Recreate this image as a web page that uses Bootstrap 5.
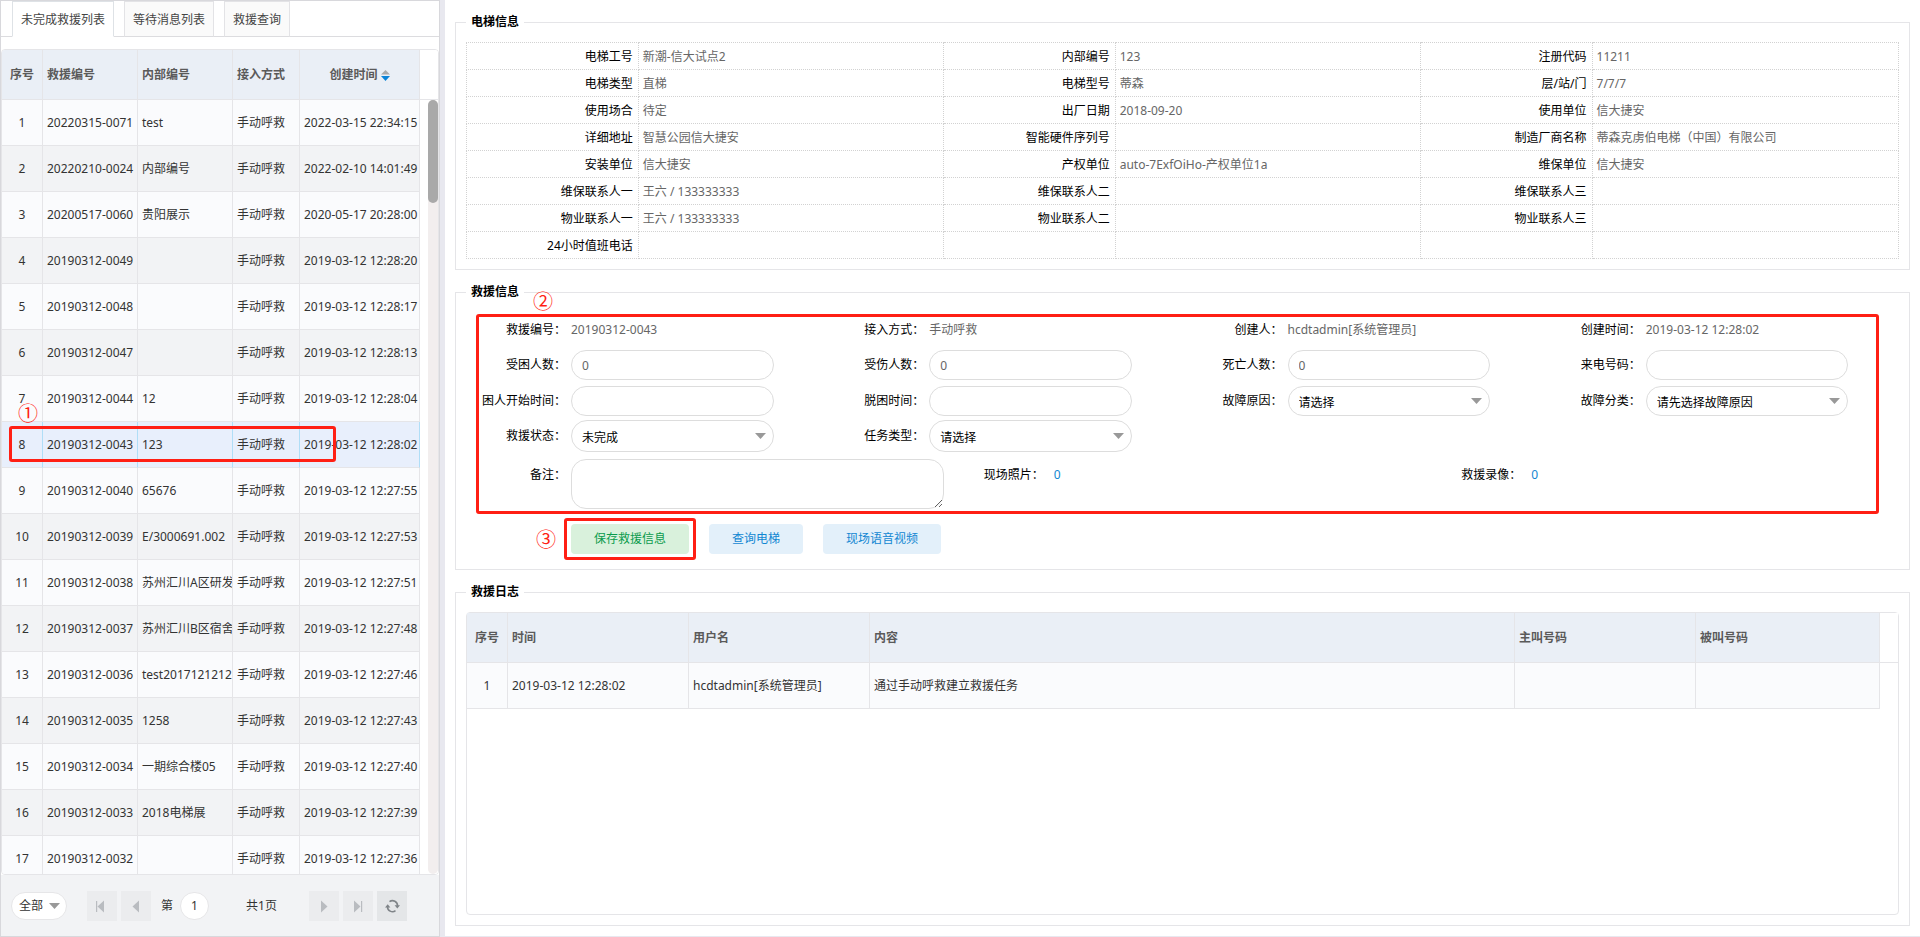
<!DOCTYPE html>
<html lang="zh-CN">
<head>
<meta charset="utf-8">
<meta name="viewport" content="width=device-width, initial-scale=1">
<title>电梯救援</title>
<link rel="stylesheet" href="https://cdn.jsdelivr.net/npm/bootstrap@5.3.0/dist/css/bootstrap.min.css">
<style>
  :root { --line: #e5e5e8; --mark-red: #ff1f14; }
  body {
    font-family: "Noto Sans", "Noto Sans CJK SC", sans-serif;
    font-size: 12px; line-height: 18px; color: #333; background: #e8e8ef;
  }
  button, input, select, textarea { font-family: inherit; font-size: 12px; }

  /* left list */
  .side { width: 440px; border: 1px solid #d8d8dc; background: #fff; }
  .side .nav-tabs { height: 36px; padding-left: 11px; gap: 10px; border-bottom: 1px solid #dcdcdf; }
  .side .nav-link {
    height: 36px; margin: 0; padding: 0 8px; border: 1px solid #e3e3e6; border-bottom-color: #dcdcdf;
    border-radius: 0; background: #fafafa; color: #444; line-height: 36px;
  }
  .side .nav-link.active { background: #fff; border-bottom-color: #fff; color: #444; }
  .list-grid { min-height: 0; margin-top: 12px; border: 1px solid var(--line); border-radius: 4px; }

  .grid-table { width: 100%; table-layout: fixed; border-collapse: separate; border-spacing: 0; }
  .grid-table th, .grid-table td {
    height: 46px; padding: 0 4px; overflow: hidden; white-space: nowrap;
    border: 0 solid var(--line); border-width: 0 1px 1px 0;
  }
  .grid-table th { height: 50px; background: #eaeff6; color: #5a5a5a; font-weight: 700; }
  .grid-table td { background: #fafbfd; }
  .grid-table tr:nth-child(even) td { background: #f2f3f5; }
  .grid-table tr.picked td { background: #e8effc; border-right-color: #b0def7; }
  .grid-table th:first-child, .grid-table td:first-child { text-align: center; }
  .grid-table th.gutter { background: #fff; border-right: 0; }
  .grid-table tr td.gutter, .grid-table tr.picked td.gutter { background: #fff; border: 0; }
  .c-no { width: 41px; }
  .c-code { width: 95px; }
  .c-way { width: 67px; }
  .c-date { width: 120px; }
  .c-log { width: 181px; }
  .c-callee { width: 184px; }
  .c-gutter { width: 18px; }

  .scroll-track { right: 0; top: 50px; bottom: 0; width: 10px; border-radius: 5px; background: #f2eeee; }
  .scroll-thumb { height: 103px; border-radius: 5px; background: #a9a9a9; }

  .pager { height: 61px; padding-left: 10px; background: #f2f3f5; }
  .pager .pill { height: 28px; border: 1px solid #e6e6e8; border-radius: 14px; background-color: #fff; color: #333; }
  .pager select { width: 56px; margin-right: 20px; padding: 0 0 0 7px; background-position: right 6px center; }
  .pager label { margin-left: 10px; }
  .pager input { width: 29px; margin: 0 37px 0 7px; padding: 0; color: #666; }
  .pager .total { margin-right: 32px; }
  .pager .btn { width: 30px; height: 30px; padding: 0; border: 0; border-radius: 0; background: #ebecee; line-height: 0; }
  .pager .btn-reload { background: #e4e6e8; }

  .pick {
    appearance: none;
    background: #fff url("data:image/svg+xml,%3Csvg xmlns='http://www.w3.org/2000/svg' width='11' height='6'%3E%3Cpath d='M0 0h11L5.500 6z' fill='%23999'/%3E%3C/svg%3E") no-repeat right 7px center;
  }

  /* right panels */
  .main { margin: 0 0 1px 5px; padding: 13px 10px 10px; background: #fff; }
  .main fieldset { border: 1px solid var(--line); padding: 11px 10px 10px; }
  .main fieldset + fieldset { margin-top: 13px; }
  .main .rescue { padding-top: 12px; padding-bottom: 15px; }
  .main legend { margin: 0; padding: 0 5px; font-size: 12px; line-height: 18px; font-weight: 700; color: #000; }

  .info-table { width: 100%; table-layout: fixed; border-collapse: collapse; }
  .info-table th, .info-table td { height: 27px; padding: 2px 5px 0 4px; border: 1px dotted #d2d2d2; color: #666; }
  .info-table th { width: 12%; text-align: right; font-weight: 400; color: #000; }
  .info-table td { width: 21.3%; }
  .info-table td:last-child { width: auto; }

  .field { display: flex; align-items: center; height: 36px; }
  .field-low { height: 34px; }
  .field > label, .field > .cap { flex: none; width: 105px; padding-right: 5px; text-align: right; white-space: nowrap; color: #000; }
  .field > .val { color: #666; }
  .field > input, .field > select {
    width: calc((100% - 105px) * 0.8); height: 30px; padding: 0 10px;
    border: 1px solid #ddd; border-radius: 15px; color: #666;
  }
  .field > select { padding-top: 3px; color: #000; }
  .field-low > select { height: 32px; border-radius: 16px; }
  .field-note { height: 56px; padding-top: 6px; }
  .field-note > label, .field-note > .cap, .field-note > a { margin-bottom: 18px; }
  .field-note > textarea { flex: 1; height: 50px; border: 1px solid #ddd; border-radius: 15px; padding: 4px 10px; resize: both; }
  .field-note > a { padding-left: 5px; color: #1287d2; text-decoration: none; }
  .actions { margin-top: 15px; padding-left: 105px; gap: 20px; }
  .actions .btn { height: 30px; padding: 0 23px; border: 0; border-radius: 4px; font-size: 12px; line-height: 30px; }
  .btn-save { background: #d9f1dc; color: #0a9b4c; }
  .btn-soft { background: #e3f0fa; color: #1287d2; }
  .log-grid { border: 1px solid var(--line); border-radius: 4px; }

  /* guide marks lying over the page */
  .frame-mark { position: absolute; border: 3px solid var(--mark-red); border-radius: 3px; pointer-events: none; }
  .step-mark { position: absolute; font-family: "Noto Sans CJK SC", sans-serif; font-size: 20px; line-height: 20px; color: var(--mark-red); pointer-events: none; }
  .frame-row { left: 7px; top: 376px; width: 327px; height: 36px; }
  .step-row { left: 16px; top: 353px; }
  .frame-form { left: 10px; right: 20px; top: 1px; bottom: -5px; }
  .step-form { left: 67px; top: -22px; }
  .frame-save { inset: -6px -7px -6px -7px; }
  .step-save { left: -35px; top: 5px; }
</style>
</head>
<body>
<div class="d-flex vh-100">
  <aside class="side d-flex flex-column flex-shrink-0">
    <ul class="nav nav-tabs flex-nowrap flex-shrink-0">
      <li class="nav-item"><button type="button" class="nav-link active">未完成救援列表</button></li>
      <li class="nav-item"><button type="button" class="nav-link">等待消息列表</button></li>
      <li class="nav-item"><button type="button" class="nav-link">救援查询</button></li>
    </ul>
    <div class="list-grid position-relative flex-grow-1 overflow-hidden">
      <table class="grid-table">
        <colgroup><col class="c-no"><col class="c-code"><col class="c-code"><col class="c-way"><col class="c-date"><col></colgroup>
        <thead>
          <tr><th>序号</th><th>救援编号</th><th>内部编号</th><th>接入方式</th>
            <th class="text-center">创建时间 <svg width="9" height="11" viewBox="0 0 9 11"><path d="M4.500 0L9 4.500H0z" fill="#aaa"/><path d="M0 6h9L4.500 11z" fill="#0b84d8"/></svg></th>
            <th class="gutter"></th></tr>
        </thead>
        <tbody>
          <tr><td>1</td><td>20220315-0071</td><td>test</td><td>手动呼救</td><td>2022-03-15 22:34:15</td><td class="gutter"></td></tr>
          <tr><td>2</td><td>20220210-0024</td><td>内部编号</td><td>手动呼救</td><td>2022-02-10 14:01:49</td><td class="gutter"></td></tr>
          <tr><td>3</td><td>20200517-0060</td><td>贵阳展示</td><td>手动呼救</td><td>2020-05-17 20:28:00</td><td class="gutter"></td></tr>
          <tr><td>4</td><td>20190312-0049</td><td></td><td>手动呼救</td><td>2019-03-12 12:28:20</td><td class="gutter"></td></tr>
          <tr><td>5</td><td>20190312-0048</td><td></td><td>手动呼救</td><td>2019-03-12 12:28:17</td><td class="gutter"></td></tr>
          <tr><td>6</td><td>20190312-0047</td><td></td><td>手动呼救</td><td>2019-03-12 12:28:13</td><td class="gutter"></td></tr>
          <tr><td>7</td><td>20190312-0044</td><td>12</td><td>手动呼救</td><td>2019-03-12 12:28:04</td><td class="gutter"></td></tr>
          <tr class="picked"><td>8</td><td>20190312-0043</td><td>123</td><td>手动呼救</td><td>2019-03-12 12:28:02</td><td class="gutter"></td></tr>
          <tr><td>9</td><td>20190312-0040</td><td>65676</td><td>手动呼救</td><td>2019-03-12 12:27:55</td><td class="gutter"></td></tr>
          <tr><td>10</td><td>20190312-0039</td><td>E/3000691.002</td><td>手动呼救</td><td>2019-03-12 12:27:53</td><td class="gutter"></td></tr>
          <tr><td>11</td><td>20190312-0038</td><td>苏州汇川A区研发</td><td>手动呼救</td><td>2019-03-12 12:27:51</td><td class="gutter"></td></tr>
          <tr><td>12</td><td>20190312-0037</td><td>苏州汇川B区宿舍</td><td>手动呼救</td><td>2019-03-12 12:27:48</td><td class="gutter"></td></tr>
          <tr><td>13</td><td>20190312-0036</td><td>test2017121212</td><td>手动呼救</td><td>2019-03-12 12:27:46</td><td class="gutter"></td></tr>
          <tr><td>14</td><td>20190312-0035</td><td>1258</td><td>手动呼救</td><td>2019-03-12 12:27:43</td><td class="gutter"></td></tr>
          <tr><td>15</td><td>20190312-0034</td><td>一期综合楼05</td><td>手动呼救</td><td>2019-03-12 12:27:40</td><td class="gutter"></td></tr>
          <tr><td>16</td><td>20190312-0033</td><td>2018电梯展</td><td>手动呼救</td><td>2019-03-12 12:27:39</td><td class="gutter"></td></tr>
          <tr><td>17</td><td>20190312-0032</td><td></td><td>手动呼救</td><td>2019-03-12 12:27:36</td><td class="gutter"></td></tr>
        </tbody>
      </table>
      <div class="scroll-track position-absolute"><div class="scroll-thumb"></div></div>
      <span class="step-mark step-row">①</span>
      <span class="frame-mark frame-row"></span>
    </div>
    <div class="pager d-flex align-items-center flex-shrink-0">
      <select class="pill pick" aria-label="每页条数"><option>全部</option></select>
      <button type="button" class="btn me-1" aria-label="首页"><svg width="30" height="30"><path d="M9 10h1.200v11H9zM17 9.500v12L10.500 15.500z" fill="#b9bcc0"/></svg></button>
      <button type="button" class="btn" aria-label="上一页"><svg width="30" height="30"><path d="M18 9.500v12L11.500 15.500z" fill="#b9bcc0"/></svg></button>
      <label for="pageNo">第</label>
      <input id="pageNo" class="pill text-center" type="text" value="1">
      <span class="total">共1页</span>
      <button type="button" class="btn me-1" aria-label="下一页"><svg width="30" height="30"><path d="M12 9.500v12l6.500-6z" fill="#b9bcc0"/></svg></button>
      <button type="button" class="btn me-1" aria-label="末页"><svg width="30" height="30"><path d="M11 9.500v12l6.500-6zM18 10h1.200v11H18z" fill="#b9bcc0"/></svg></button>
      <button type="button" class="btn btn-reload" aria-label="刷新"><svg width="30" height="30" fill="none" stroke="#7f8488" stroke-width="1.600"><path d="M12.500 10.700A5 5 0 0 1 20.500 15M10.500 15.500A5 5 0 0 0 18.500 19.700"/><path d="M17.600 14.200h5.400l-2.700 3.300zM8 16.500h5.400l-2.700-3.300z" fill="#7f8488" stroke="none"/></svg></button>
    </div>
  </aside>

  <main class="main d-flex flex-column flex-grow-1">
    <fieldset>
      <legend class="float-none w-auto">电梯信息</legend>
      <table class="info-table">
        <tr><th>电梯工号</th><td>新潮-信大试点2</td><th>内部编号</th><td>123</td><th>注册代码</th><td>11211</td></tr>
        <tr><th>电梯类型</th><td>直梯</td><th>电梯型号</th><td>蒂森</td><th>层/站/门</th><td>7/7/7</td></tr>
        <tr><th>使用场合</th><td>待定</td><th>出厂日期</th><td>2018-09-20</td><th>使用单位</th><td>信大捷安</td></tr>
        <tr><th>详细地址</th><td>智慧公园信大捷安</td><th>智能硬件序列号</th><td></td><th>制造厂商名称</th><td>蒂森克虏伯电梯（中国）有限公司</td></tr>
        <tr><th>安装单位</th><td>信大捷安</td><th>产权单位</th><td>auto-7ExfOiHo-产权单位1a</td><th>维保单位</th><td>信大捷安</td></tr>
        <tr><th>维保联系人一</th><td>王六 / 133333333</td><th>维保联系人二</th><td></td><th>维保联系人三</th><td></td></tr>
        <tr><th>物业联系人一</th><td>王六 / 133333333</td><th>物业联系人二</th><td></td><th>物业联系人三</th><td></td></tr>
        <tr><th>24小时值班电话</th><td></td><th></th><td></td><th></th><td></td></tr>
      </table>
    </fieldset>

    <fieldset class="rescue">
      <legend class="float-none w-auto">救援信息</legend>
      <form>
        <div class="position-relative">
          <div class="row g-0">
            <div class="col-3 field field-low"><span class="cap">救援编号：</span><span class="val">20190312-0043</span></div>
            <div class="col-3 field field-low"><span class="cap">接入方式：</span><span class="val">手动呼救</span></div>
            <div class="col-3 field field-low"><span class="cap">创建人：</span><span class="val">hcdtadmin[系统管理员]</span></div>
            <div class="col-3 field field-low"><span class="cap">创建时间：</span><span class="val">2019-03-12 12:28:02</span></div>

            <div class="col-3 field"><label for="trapped">受困人数：</label><input id="trapped" type="text" value="0"></div>
            <div class="col-3 field"><label for="hurt">受伤人数：</label><input id="hurt" type="text" value="0"></div>
            <div class="col-3 field"><label for="dead">死亡人数：</label><input id="dead" type="text" value="0"></div>
            <div class="col-3 field"><label for="caller">来电号码：</label><input id="caller" type="text"></div>

            <div class="col-3 field"><label for="startAt">困人开始时间：</label><input id="startAt" type="text"></div>
            <div class="col-3 field"><label for="freeAt">脱困时间：</label><input id="freeAt" type="text"></div>
            <div class="col-3 field"><label for="cause">故障原因：</label><select id="cause" class="pick"><option>请选择</option></select></div>
            <div class="col-3 field"><label for="kind">故障分类：</label><select id="kind" class="pick"><option>请先选择故障原因</option></select></div>

            <div class="col-3 field field-low"><label for="state">救援状态：</label><select id="state" class="pick"><option>未完成</option></select></div>
            <div class="col-3 field field-low"><label for="task">任务类型：</label><select id="task" class="pick"><option>请选择</option></select></div>
          </div>
          <div class="row g-0">
            <div class="col-4 field field-note"><label for="note">备注：</label><textarea id="note"></textarea></div>
            <div class="col-4 field field-note"><span class="cap">现场照片：</span><a href="#">0</a></div>
            <div class="col-4 field field-note"><span class="cap">救援录像：</span><a href="#">0</a></div>
          </div>
          <span class="step-mark step-form">②</span>
          <span class="frame-mark frame-form"></span>
        </div>
        <div class="actions d-flex">
          <div class="position-relative">
            <button type="button" class="btn btn-save">保存救援信息</button>
            <span class="frame-mark frame-save"></span>
            <span class="step-mark step-save">③</span>
          </div>
          <button type="button" class="btn btn-soft">查询电梯</button>
          <button type="button" class="btn btn-soft">现场语音视频</button>
        </div>
      </form>
    </fieldset>

    <fieldset class="d-flex flex-column flex-grow-1">
      <legend class="float-none w-auto">救援日志</legend>
      <div class="log-grid flex-grow-1">
        <table class="grid-table">
          <colgroup><col class="c-no"><col class="c-log"><col class="c-log"><col><col class="c-log"><col class="c-callee"><col class="c-gutter"></colgroup>
          <thead><tr><th>序号</th><th>时间</th><th>用户名</th><th>内容</th><th>主叫号码</th><th>被叫号码</th><th class="gutter"></th></tr></thead>
          <tbody><tr><td>1</td><td>2019-03-12 12:28:02</td><td>hcdtadmin[系统管理员]</td><td>通过手动呼救建立救援任务</td><td></td><td></td><td class="gutter"></td></tr></tbody>
        </table>
      </div>
    </fieldset>
  </main>
</div>
<script src="https://cdn.jsdelivr.net/npm/bootstrap@5.3.0/dist/js/bootstrap.bundle.min.js"></script>
</body>
</html>
